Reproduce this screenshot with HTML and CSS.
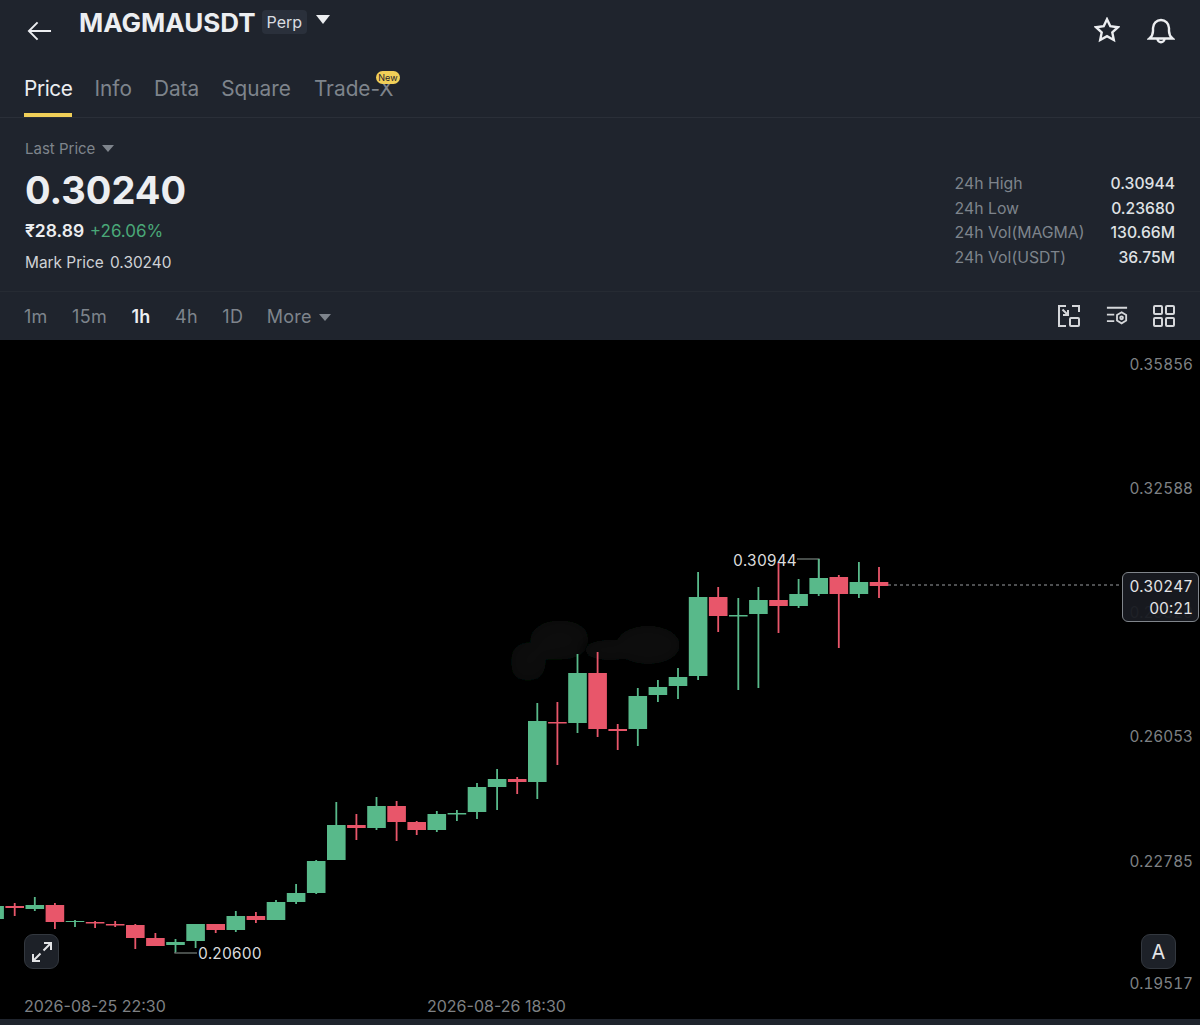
FILE: index.html
```html
<!DOCTYPE html>
<html lang="en">
<head>
  <meta charset="UTF-8">
  <meta name="viewport" content="width=device-width, initial-scale=1.0">
  <title>MAGMAUSDT Perp</title>
  <link rel="stylesheet" href="styles.css">
</head>
<body>
  <!-- top bar -->
  <header class="topbar">
    <svg class="back" viewBox="0 0 26 22"><path d="M25 11H2M11 2l-9 9 9 9"/></svg>
    <h1 class="symbol">MAGMAUSDT</h1>
    <span class="badge">Perp</span>
    <span class="caret caret-title"></span>
    <div class="topbar-icons">
      <svg class="icon-star" viewBox="0 0 26 26"><path d="M13 2.2l3.3 7 7.6 1-5.6 5.2 1.500 7.600-6.800-3.800-6.800 3.800 1.500-7.600L2.100 10.200l7.600-1z"/></svg>
      <svg class="icon-bell" viewBox="0 0 28 28"><path d="M2.500 21.500c2.500-2.200 3.500-4 3.500-7.500v-3a8 8 0 0 1 16 0v3c0 3.500 1 5.300 3.500 7.500z"/><path d="M10.500 21.700a3.500 3.500 0 0 0 7 0"/></svg>
    </div>
  </header>

  <!-- tabs -->
  <nav class="tabs">
    <a class="tab active">Price</a>
    <a class="tab">Info</a>
    <a class="tab">Data</a>
    <a class="tab">Square</a>
    <a class="tab tab-new">Trade-X<span class="new">New</span></a>
  </nav>

  <!-- price summary -->
  <section class="summary">
    <div class="price-col">
      <div class="last-label">Last Price <span class="caret caret-small"></span></div>
      <div class="last-price">0.30240</div>
      <div class="change"><b>₹28.89</b> <span class="up">+26.06%</span></div>
      <div class="mark">Mark Price <span>0.30240</span></div>
    </div>
    <dl class="stats">
      <dt>24h High</dt><dd>0.30944</dd>
      <dt>24h Low</dt><dd>0.23680</dd>
      <dt>24h Vol(MAGMA)</dt><dd>130.66M</dd>
      <dt>24h Vol(USDT)</dt><dd>36.75M</dd>
    </dl>
  </section>

  <!-- intervals -->
  <div class="intervals">
    <a>1m</a>
    <a>15m</a>
    <a class="active">1h</a>
    <a>4h</a>
    <a>1D</a>
    <a class="more">More <span class="caret caret-small"></span></a>
    <div class="tools">
      <svg viewBox="0 0 22 22"><path d="M8 1H1v20h7M14 1h7v6M4.500 4.500l5.500 5.500M10 5v5H5"/><rect x="12" y="13" width="9" height="8" rx="1"/></svg>
      <svg viewBox="0 0 24 22"><path d="M1 2h22M1 9.500h8M1 16.500h8"/><path d="M17 7l5 3v6l-5 3-5-3v-6z"/><circle cx="17" cy="13" r="1.500"/></svg>
      <svg viewBox="0 0 22 22"><rect x="1" y="1" width="8" height="8" rx="1"/><rect x="13" y="1" width="8" height="8" rx="1"/><rect x="1" y="13" width="8" height="8" rx="1"/><rect x="13" y="13" width="8" height="8" rx="1"/></svg>
    </div>
  </div>

  <!-- chart -->
  <main class="chart">
    <svg id="candles" class="plot" viewBox="0 340 1200 679">
      <defs>
        <filter id="blur" x="-50%" y="-50%" width="200%" height="200%"><feGaussianBlur stdDeviation="6"/></filter>
        <filter id="blur-wide" x="-50%" y="-50%" width="200%" height="200%"><feGaussianBlur stdDeviation="10"/></filter>
      </defs>
      <g class="smudge-dim" filter="url(#blur-wide)">
        <ellipse cx="560" cy="640" rx="30" ry="20"/>
        <ellipse cx="528" cy="662" rx="18" ry="20"/>
      </g>
      <g class="smudge" filter="url(#blur)">
        <ellipse cx="648" cy="645" rx="32" ry="19"/>
        <ellipse cx="610" cy="650" rx="26" ry="10"/>
      </g>
      <path class="dash" d="M888 585H1122"/>
      <path class="leader" d="M797 559H819V578M175 952V953H197"/>
      <text class="hl" x="733" y="566">0.30944</text>
      <text class="hl" x="198" y="959">0.20600</text>
      <text class="axis" x="1193" y="370">0.35856</text>
      <text class="axis" x="1193" y="494">0.32588</text>
      <text class="axis" x="1193" y="618">0.29320</text>
      <text class="axis" x="1193" y="742">0.26053</text>
      <text class="axis" x="1193" y="867">0.22785</text>
      <text class="axis" x="1193" y="989">0.19517</text>
      <text class="date" x="24" y="1012">2026-08-25 22:30</text>
      <text class="date" x="427" y="1012">2026-08-26 18:30</text>
    </svg>
    <div class="price-tag">
      <span>0.30247</span>
      <span>00:21</span>
    </div>
    <button class="chart-btn btn-expand">
      <svg viewBox="0 0 24 24"><path d="M14 3h7v7M21 3l-7.500 7.500M10 21H3v-7M3 21l7.500-7.500"/></svg>
    </button>
    <button class="chart-btn btn-auto">A</button>
  </main>
  <div class="bottom-strip"></div>

  <script src="chart.js"></script>
</body>
</html>
```

FILE: styles.css
```css
* {
  box-sizing: border-box;
}

body {
  margin: 0;
  width: 1200px;
  height: 1025px;
  overflow: hidden;
  background: #1f242d;
  color: #eceef1;
  font-family: Inter, "Noto Sans", sans-serif;
}

.caret {
  display: inline-block;
  width: 0;
  height: 0;
  border-style: solid;
  border-color: transparent;
  border-bottom-width: 0;
}
.caret-title {
  margin-left: 9px;
  margin-top: -5px;
  border-width: 9px 7px 0;
  border-top-color: #eceef1;
}
.caret-small {
  margin-left: 2px;
  border-width: 7px 6px 0;
  border-top-color: #7e848c;
  vertical-align: 2px;
}

/* top bar */
.topbar {
  display: flex;
  align-items: center;
  height: 44px;
  padding-left: 27px;
  padding-right: 25px;
}
.back {
  width: 25px;
  height: 22px;
  margin-top: 17px;
  fill: none;
  stroke: #eceef1;
  stroke-width: 2;
}
.symbol {
  margin: 0 0 0 27px;
  font-size: 26px;
  font-weight: 700;
}
.badge {
  margin-left: 6px;
  padding: 3px 5px;
  background: #2a303b;
  border-radius: 4px;
  font-size: 16px;
  line-height: 18px;
  color: #d9dce0;
}
.topbar-icons {
  display: flex;
  gap: 27px;
  margin-left: auto;
  margin-top: 18px;
}
.topbar-icons svg {
  fill: none;
  stroke: #eceef1;
  stroke-width: 2.4;
}
.icon-star {
  width: 26px;
  height: 26px;
}
.icon-bell {
  width: 28px;
  height: 28px;
}

/* tabs */
.tabs {
  display: flex;
  gap: 22px;
  height: 74px;
  padding: 30px 0 0 24px;
  border-bottom: 1px solid #2a2f38;
}
.tab {
  position: relative;
  height: 43px;
  font-size: 20.8px;
  line-height: 30px;
  color: #7e848c;
}
.tab-new {
  margin-left: 1px;
}
.tab.active {
  color: #eceef1;
  letter-spacing: -0.4px;
  border-bottom: 4px solid #f0cf58;
}
.new {
  position: absolute;
  top: -3px;
  right: -6px;
  padding: 0 2px;
  background: #f0cf58;
  border-radius: 7px;
  font-size: 9px;
  line-height: 13px;
  color: #1f242d;
}

/* price summary */
.summary {
  display: flex;
  justify-content: space-between;
  height: 174px;
  padding: 21px 25px 0;
  border-bottom: 1px solid #262b33;
}
.last-label {
  font-size: 15px;
  line-height: 20px;
  color: #7e848c;
}
.last-price {
  margin-top: 8px;
  font-size: 38px;
  font-weight: 700;
  line-height: 46px;
}
.change {
  margin-top: 7px;
  font-size: 17px;
  line-height: 22px;
}
.change b {
  font-size: 17.500px;
  font-weight: 600;
}
.up {
  margin-left: 1px;
  color: #4aa878;
}
.mark {
  margin-top: 11px;
  font-size: 15.400px;
  line-height: 20px;
  color: #cfd2d6;
}
.mark span {
  margin-left: 2px;
}
.stats {
  display: grid;
  grid-template-columns: auto auto;
  column-gap: 26px;
  row-gap: 0;
  align-content: start;
  margin: 33px 0 0;
  font-size: 15.800px;
  line-height: 24.6px;
}
.stats dt {
  color: #7e848c;
}
.stats dd {
  margin: 0;
  font-size: 15.700px;
  font-weight: 500;
  text-align: right;
  color: #dfe1e4;
}

/* intervals */
.intervals {
  display: flex;
  align-items: center;
  gap: 24.4px;
  height: 48px;
  padding: 0 25px 0 24px;
  font-size: 18px;
  letter-spacing: 0.3px;
  color: #7e848c;
}
.intervals .active {
  font-weight: 600;
  color: #eceef1;
}
.more {
  margin-left: -1px;
}
.tools {
  display: flex;
  gap: 25.500px;
  margin-left: auto;
}
.tools svg {
  width: 22px;
  height: 22px;
  fill: none;
  stroke: #d5d7da;
  stroke-width: 2;
}

/* chart */
.chart {
  position: relative;
  height: 679px;
  background: #000;
}
.plot {
  display: block;
  width: 1200px;
  height: 679px;
}
.smudge {
  fill: #0b110e;
}
.smudge-dim {
  fill: #070a08;
}
.dash {
  stroke: #9a9da1;
  stroke-dasharray: 3 3;
}
.leader {
  fill: none;
  stroke: #8d9a94;
  stroke-width: 1.2;
}
.plot text {
  font-size: 15.300px;
  font-variant-numeric: tabular-nums;
}
.hl {
  fill: #dcdcdc;
}
.axis {
  fill: #7e8184;
  text-anchor: end;
}
.plot .date {
  font-size: 16px;
  font-variant-numeric: normal;
  fill: #7e8184;
}
.wick-up, .body-up {
  fill: #58b98a;
}
.wick-down, .body-down {
  fill: #e8566a;
}
.price-tag {
  position: absolute;
  top: 232px;
  left: 1122px;
  display: flex;
  flex-direction: column;
  width: 77px;
  height: 50px;
  padding: 3px 5px 0 0;
  background: rgba(24, 27, 33, 0.94);
  border: 1px solid #80858b;
  border-radius: 6px;
  font-size: 15.300px;
  line-height: 22px;
  font-variant-numeric: tabular-nums;
  text-align: right;
  color: #e3e4e6;
}
.chart-btn {
  position: absolute;
  top: 594px;
  width: 35px;
  height: 35px;
  padding: 0;
  background: #1d2128;
  border: 1px solid #33383f;
  border-radius: 9px;
  font: 20px Inter, sans-serif;
  color: #e3e4e6;
}
.btn-expand {
  left: 24px;
}
.btn-expand svg {
  display: block;
  width: 24px;
  height: 24px;
  margin: auto;
  fill: none;
  stroke: #e3e4e6;
  stroke-width: 2;
}
.btn-auto {
  left: 1141px;
}
.bottom-strip {
  height: 6px;
}
```

FILE: chart.js
```js
// up/down, body top, body bottom, wick top, wick bottom
const candles = [
  [1, 906, 919, 904, 920], [0, 906, 908, 903, 916], [1, 905, 909, 897, 911], [0, 905, 922, 903, 929],
  [1, 921, 922, 920, 927], [0, 922, 923.5, 921, 928], [0, 924, 925.5, 921, 927], [0, 925, 938, 924, 949],
  [0, 938, 946, 933, 946], [1, 942, 945, 939, 952], [1, 924, 941, 924, 948], [0, 924, 930, 924, 933],
  [1, 916, 930, 911, 932], [0, 916, 920, 912, 923], [1, 902, 920, 900, 920], [1, 893, 902, 884, 904],
  [1, 861, 893, 860, 894], [1, 825, 860, 802, 860], [0, 825, 828, 814, 840], [1, 806, 828, 797, 830],
  [0, 806, 822, 801, 841], [0, 822, 830, 821, 835], [1, 814, 830, 811, 832], [1, 813, 814.5, 810, 821],
  [1, 787, 812, 783, 819], [1, 779, 787, 769, 810], [0, 779, 782, 777, 794], [1, 721, 782, 703, 799],
  [0, 722, 723.5, 702, 765], [1, 673, 723, 654, 733], [0, 673, 729, 652, 737], [0, 729, 731, 724, 750],
  [1, 696, 729, 688, 746], [1, 687, 695, 680, 702], [1, 677, 686, 668, 699], [1, 597, 676, 572, 680],
  [0, 597, 616, 587, 632], [1, 615, 616.5, 598, 690], [1, 600, 614, 587, 688], [0, 600, 606, 563, 633],
  [1, 594, 606, 579, 608], [1, 578, 594, 559, 596], [0, 577, 594, 575, 648], [1, 582, 594, 562, 598],
  [0, 582, 586, 567, 598]
];

const svg = document.getElementById('candles');

function addRect(cls, x, y, w, h) {
  const r = document.createElementNS('http://www.w3.org/2000/svg', 'rect');
  r.setAttribute('class', cls);
  r.setAttribute('x', x);
  r.setAttribute('y', y);
  r.setAttribute('width', w);
  r.setAttribute('height', h);
  svg.appendChild(r);
}

candles.forEach(function(c, i) {
  const x = -5.4 + 20.1 * i;
  const dir = c[0] ? 'up' : 'down';
  addRect('wick-' + dir, x - 0.9, c[3], 1.8, c[4] - c[3]);
  addRect('body-' + dir, x - 9.3, c[1], 18.6, c[2] - c[1]);
});
```
